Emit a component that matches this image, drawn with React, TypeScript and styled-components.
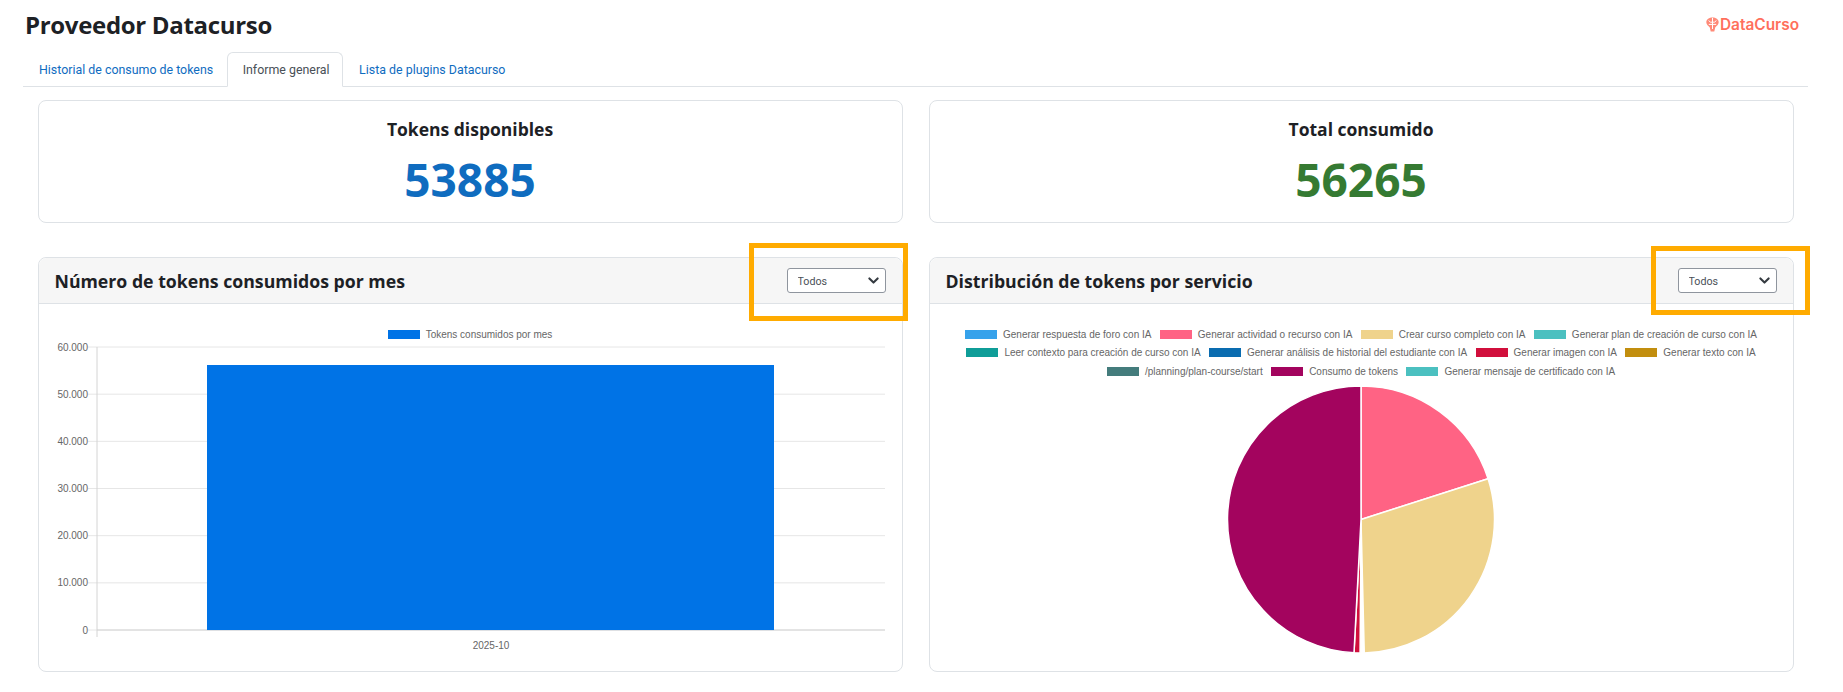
import * as React from 'react';
import styled, { createGlobalStyle } from 'styled-components';

const GlobalStyle = createGlobalStyle`
  html, body {
    margin: 0;
    padding: 0;
    background: #fff;
    overflow: hidden;
  }
  body {
    font-family: "Open Sans", "Noto Sans", sans-serif;
    color: #1d2125;
  }
`;

const Page = styled.div`
  width: 1843px;
  height: 692px;
  box-sizing: border-box;
  padding: 0 35px 0 23px;
`;

const Header = styled.header`
  display: flex;
  justify-content: space-between;
  align-items: center;
  height: 52px;
  padding: 0 0 3px 2px;
  box-sizing: border-box;
`;

const PageTitle = styled.h1`
  margin: 0;
  font-size: 24px;
  font-weight: 700;
  letter-spacing: -0.32px;
`;

const Logo = styled.div`
  display: flex;
  align-items: center;
  gap: 1px;
  margin-right: 9px;
  color: #ff6f5c;
  font-family: "Inter", sans-serif;
  font-size: 15.4px;
  font-weight: 600;
`;

const Tabs = styled.nav`
  display: flex;
  height: 35px;
  box-sizing: border-box;
  border-bottom: 1px solid #dee2e6;
`;

const Tab = styled.a<{ $active?: boolean }>`
  display: block;
  box-sizing: border-box;
  height: 35px;
  padding: 8px 12.5px 0 15px;
  font-family: "Roboto", sans-serif;
  font-size: 12.4px;
  line-height: 18px;
  color: ${props => (props.$active ? '#495057' : '#0f6cbf')};
  background: ${props => (props.$active ? '#fff' : 'transparent')};
  border: 1px solid ${props => (props.$active ? '#dee2e6' : 'transparent')};
  border-bottom-color: ${props => (props.$active ? '#fff' : 'transparent')};
  border-radius: 6px 6px 0 0;
`;

const Content = styled.main`
  display: grid;
  grid-template-columns: 865px 865px;
  column-gap: 26px;
  row-gap: 34px;
  padding: 13px 0 0 14.5px;
`;

const Card = styled.section`
  position: relative;
  box-sizing: border-box;
  border: 1px solid #dee2e6;
  border-radius: 8px;
  background: #fff;
`;

const StatCard = styled(Card)`
  height: 123px;
  display: flex;
  flex-direction: column;
  align-items: center;
  padding-top: 16px;
`;

const StatLabel = styled.div`
  font-size: 17.5px;
  font-weight: 700;
  line-height: 24px;
`;

const StatValue = styled.div<{ $color: string }>`
  font-size: 46px;
  font-weight: 700;
  line-height: 60px;
  margin-top: 8px;
  color: ${props => props.$color};
`;

const ChartCard = styled(Card)`
  height: 415px;
`;

const ChartHeader = styled.div`
  display: flex;
  justify-content: space-between;
  align-items: center;
  box-sizing: border-box;
  height: 46px;
  padding: 0 16px;
  background: #f6f6f6;
  border-bottom: 1px solid #dee2e6;
  border-radius: 8px 8px 0 0;
`;

const ChartTitle = styled.h2`
  margin: 0;
  font-size: 17.7px;
  font-weight: 700;
`;

const FilterSelect = styled.select`
  appearance: none;
  box-sizing: border-box;
  width: 99px;
  height: 25px;
  padding: 1px 20px 0 10px;
  font-family: "Roboto", sans-serif;
  font-size: 10.7px;
  color: #495057;
  border: 1px solid #8f959e;
  border-radius: 3px;
  background: #fff url("data:image/svg+xml,%3Csvg xmlns='http://www.w3.org/2000/svg' viewBox='0 0 16 16'%3E%3Cpath fill='none' stroke='%23343a40' stroke-linecap='round' stroke-linejoin='round' stroke-width='3' d='M2 5l6 6 6-6'/%3E%3C/svg%3E") no-repeat right 6px center / 11px 11px;
`;

const Highlight = styled.div<{ $left: number; $top: number; $width: number; $height: number }>`
  position: absolute;
  left: ${props => props.$left}px;
  top: ${props => props.$top}px;
  width: ${props => props.$width}px;
  height: ${props => props.$height}px;
  box-sizing: border-box;
  border: 5px solid #ffab00;
  pointer-events: none;
`;

const Legend = styled.div`
  display: flex;
  flex-direction: column;
  align-items: center;
  padding-top: 21px;
  font-family: "Liberation Sans", Arial, sans-serif;
  font-size: 10px;
  color: #666;
`;

const LegendRow = styled.div`
  display: flex;
  height: 18.5px;
  align-items: center;
  gap: 8.4px;
`;

const LegendItem = styled.span`
  display: flex;
  align-items: center;
  gap: 6px;
  white-space: nowrap;
`;

const Swatch = styled.i<{ $color: string }>`
  display: block;
  width: 32px;
  height: 9px;
  background: ${props => props.$color};
`;

const ChartSvg = styled.svg`
  display: block;
  overflow: visible;
  font-family: "Liberation Sans", Arial, sans-serif;
`;

const pieLegend = [
  [
    ['Generar respuesta de foro con IA', '#36a2eb'],
    ['Generar actividad o recurso con IA', '#ff6384'],
    ['Crear curso completo con IA', '#efd38c'],
    ['Generar plan de creación de curso con IA', '#4bc0c0'],
  ],
  [
    ['Leer contexto para creación de curso con IA', '#0f9d98'],
    ['Generar análisis de historial del estudiante con IA', '#0a6cb0'],
    ['Generar imagen con IA', '#d10f3c'],
    ['Generar texto con IA', '#c28e0e'],
  ],
  [
    ['/planning/plan-course/start', '#447c7c'],
    ['Consumo de tokens', '#a3045e'],
    ['Generar mensaje de certificado con IA', '#4bc0c0'],
  ],
];

const ticks = ['60.000', '50.000', '40.000', '30.000', '20.000', '10.000', '0'];

// offsets are relative to the svg, which starts below the legend
function BarChart() {
  const left = 58;
  const right = 846;
  const top = 3;
  const step = 47.17;
  const bottom = top + step * 6;

  return (
    <ChartSvg width={863} height={325}>
      {ticks.map((tick, i) => {
        const y = top + step * i;
        return (
          <g key={tick}>
            <line x1={left - 9} x2={right} y1={y} y2={y} stroke="#e6e6e6" />
            <text x={left - 9} y={y + 3.5} fontSize="10" fill="#666" textAnchor="end">
              {tick}
            </text>
          </g>
        );
      })}
      <line x1={left} x2={left} y1={top} y2={bottom + 7} stroke="#d4d4d4" />
      <line x1={left} x2={right} y1={bottom} y2={bottom} stroke="#d4d4d4" />
      <rect x={168} y={top + 18} width={567} height={bottom - top - 18} fill="#0073e6" />
      <text x={452} y={bottom + 19} fontSize="10" fill="#666" textAnchor="middle">
        2025-10
      </text>
    </ChartSvg>
  );
}

function polar(cx: number, cy: number, r: number, deg: number) {
  const rad = ((deg - 90) * Math.PI) / 180;
  return [cx + r * Math.cos(rad), cy + r * Math.sin(rad)];
}

const slices = [
  { from: 0, to: 72.2, color: '#ff6384' },
  { from: 72.2, to: 178.6, color: '#efd38c' },
  { from: 180.4, to: 183, color: '#d10f3c' },
  { from: 183, to: 360, color: '#a3045e' },
];

function PieChart() {
  const cx = 431;
  const cy = 138.5;
  const r = 133.5;

  return (
    <ChartSvg width={863} height={300}>
      {slices.map(slice => {
        const [x1, y1] = polar(cx, cy, r, slice.from);
        const [x2, y2] = polar(cx, cy, r, slice.to);
        const large = slice.to - slice.from > 180 ? 1 : 0;
        return (
          <path
            key={slice.color}
            d={`M${cx} ${cy}L${x1} ${y1}A${r} ${r} 0 ${large} 1 ${x2} ${y2}Z`}
            fill={slice.color}
            stroke="#fff"
            strokeWidth="1.5"
          />
        );
      })}
    </ChartSvg>
  );
}

function LogoMark() {
  return (
    <svg width="13" height="15" viewBox="0 0 13 15">
      <path
        d="M6.5 0.5C9.8 0.5 12.7 2.2 12.7 5.2C12.7 7.6 10.6 8.8 9.2 10.4L8.3 14.5H4.7L3.8 10.4C2.4 8.8 0.3 7.6 0.3 5.2C0.3 2.2 3.2 0.5 6.5 0.5Z"
        fill="#ff8a78"
      />
      <path
        d="M6.5 1V12M2.6 3.6L4.6 5.2H6.5M10.4 3.6L8.4 5.2H6.5M2.8 7.4H6.5M10.2 7.4H6.5"
        stroke="#fff"
        strokeWidth="1"
        fill="none"
      />
    </svg>
  );
}

export default function App() {
  return (
    <Page>
      <GlobalStyle />
      <Header>
        <PageTitle>Proveedor Datacurso</PageTitle>
        <Logo>
          <LogoMark />
          DataCurso
        </Logo>
      </Header>
      <Tabs>
        <Tab>Historial de consumo de tokens</Tab>
        <Tab $active>Informe general</Tab>
        <Tab>Lista de plugins Datacurso</Tab>
      </Tabs>
      <Content>
        <StatCard>
          <StatLabel>Tokens disponibles</StatLabel>
          <StatValue $color="#0f6cbf">53885</StatValue>
        </StatCard>
        <StatCard>
          <StatLabel>Total consumido</StatLabel>
          <StatValue $color="#357a32">56265</StatValue>
        </StatCard>
        <ChartCard>
          <ChartHeader>
            <ChartTitle>Número de tokens consumidos por mes</ChartTitle>
            <FilterSelect defaultValue="Todos">
              <option>Todos</option>
            </FilterSelect>
          </ChartHeader>
          <Legend>
            <LegendRow>
              <LegendItem>
                <Swatch $color="#0073e6" />
                Tokens consumidos por mes
              </LegendItem>
            </LegendRow>
          </Legend>
          <BarChart />
          <Highlight $left={710} $top={-15} $width={159} $height={78} />
        </ChartCard>
        <ChartCard>
          <ChartHeader>
            <ChartTitle>Distribución de tokens por servicio</ChartTitle>
            <FilterSelect defaultValue="Todos">
              <option>Todos</option>
            </FilterSelect>
          </ChartHeader>
          <Legend>
            {pieLegend.map((row, i) => (
              <LegendRow key={i}>
                {row.map(([label, color]) => (
                  <LegendItem key={label}>
                    <Swatch $color={color} />
                    {label}
                  </LegendItem>
                ))}
              </LegendRow>
            ))}
          </Legend>
          <PieChart />
          <Highlight $left={721.5} $top={-12} $width={159} $height={69} />
        </ChartCard>
      </Content>
    </Page>
  );
}
